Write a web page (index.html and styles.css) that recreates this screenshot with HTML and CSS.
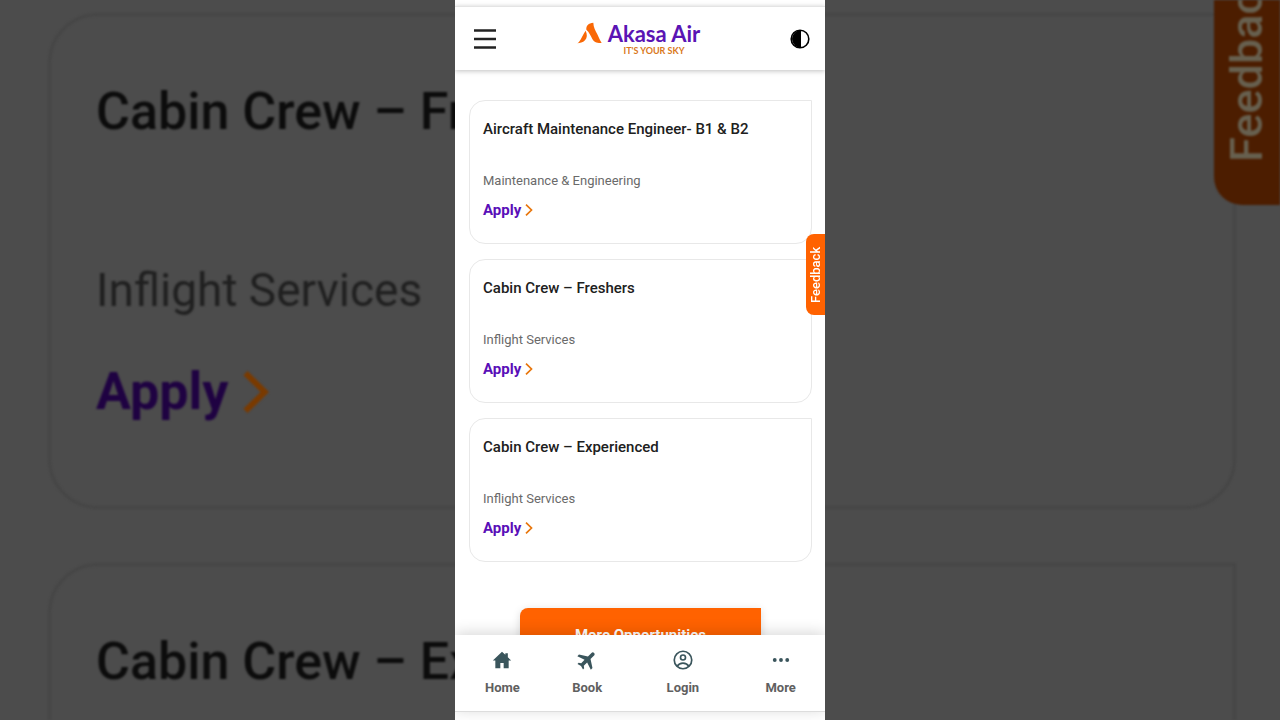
FILE: index.html
```html
<!DOCTYPE html>
<html lang="en">
<head>
    <meta charset="utf-8" />
    <meta name="viewport" content="width=device-width, initial-scale=1" />
    <title>Akasa Air - Careers</title>
    <link rel="stylesheet" href="styles.css">
</head>
<body>
    <div class="stage">

        <!-- enlarged, dimmed copy of the list behind the phone -->
        <div class="backdrop" aria-hidden="true" inert>
            <div class="jobs">
                <div class="job">
                    <h3>Cabin Crew – Freshers</h3>
                    <p>Inflight Services</p>
                    <a class="apply" href="#freshers">Apply
                        <svg class="chevron" viewBox="0 0 8 12"><path d="M1 .6l5.500 5.400-5.500 5.400" /></svg>
                    </a>
                </div>
                <div class="job">
                    <h3>Cabin Crew – Experienced</h3>
                    <p>Inflight Services</p>
                    <a class="apply" href="#experienced">Apply
                        <svg class="chevron" viewBox="0 0 8 12"><path d="M1 .6l5.500 5.400-5.500 5.400" /></svg>
                    </a>
                </div>
            </div>
            <button type="button" class="feedback">Feedback</button>
        </div>

        <div class="phone">
            <header class="header">
                <button type="button" class="icon_button" aria-label="Menu">
                    <svg class="menu_icon" viewBox="0 0 24 20"><path d="M1 1.500h22M1 10h22M1 18.500h22" /></svg>
                </button>
                <a class="logo" href="#home">
                    <svg class="logo_mark" viewBox="0 0 75 64">
                        <path d="M1 63C12 56 16 38 26 25C31 36 31 46 24 54C18 61 8 63 1 63Z" />
                        <path d="M28 22C27 10 34 2 49 1C49 14 56 26 61 36C66 46 69 55 74 62C63 62 52 62 46 50C41 40 37 30 28 22Z" />
                    </svg>
                    <span class="logo_text">
                        <span class="logo_name">Akasa Air</span>
                        <span class="logo_tag">IT'S YOUR SKY</span>
                    </span>
                </a>
                <button type="button" class="icon_button contrast" aria-label="Contrast">
                    <svg class="contrast_icon" viewBox="0 0 20 20">
                        <circle cx="10" cy="10" r="8.800" />
                        <path d="M11 1a9 9 0 1 0 0 18z" />
                    </svg>
                </button>
            </header>

            <main class="content">
                <div class="jobs">
                    <div class="job">
                        <h3>Aircraft Maintenance Engineer- B1 &amp; B2</h3>
                        <p>Maintenance &amp; Engineering</p>
                        <a class="apply" href="#engineer">Apply
                            <svg class="chevron" viewBox="0 0 8 12"><path d="M1 .6l5.500 5.400-5.500 5.400" /></svg>
                        </a>
                    </div>
                    <div class="job">
                        <h3>Cabin Crew – Freshers</h3>
                        <p>Inflight Services</p>
                        <a class="apply" href="#freshers">Apply
                            <svg class="chevron" viewBox="0 0 8 12"><path d="M1 .6l5.500 5.400-5.500 5.400" /></svg>
                        </a>
                    </div>
                    <div class="job">
                        <h3>Cabin Crew – Experienced</h3>
                        <p>Inflight Services</p>
                        <a class="apply" href="#experienced">Apply
                            <svg class="chevron" viewBox="0 0 8 12"><path d="M1 .6l5.500 5.400-5.500 5.400" /></svg>
                        </a>
                    </div>
                </div>
                <button type="button" class="more_button">More Opportunities</button>
            </main>

            <nav class="tabs">
                <a href="#home">
                    <svg viewBox="0 0 24 24"><path d="M12 2L1 12.500h3V22h6v-6.500h4V22h6v-9.500h3L19 8.700V4h-3v1.800z" /></svg>
                    Home
                </a>
                <a href="#book">
                    <svg viewBox="1 1 22 22"><path transform="rotate(45 12 12)" d="M22.500 16.500v-2.500l-8.500-5.500V3C14 1.800 13.100 1 12 1s-2 .8-2 2v5.500L1.500 14v2.500l8.500-2.700V19l-2.300 1.700V22.500l4.300-1.200 4.300 1.200v-1.800L14 19v-5.200z" /></svg>
                    Book
                </a>
                <a href="#login">
                    <svg class="outline" viewBox="0 0 24 24">
                        <circle cx="12" cy="12" r="10.500" />
                        <circle cx="12" cy="9" r="3" />
                        <path d="M5 19.500c1.500-2.500 4-3.800 7-3.800s5.500 1.300 7 3.800" />
                    </svg>
                    Login
                </a>
                <a href="#more">
                    <svg viewBox="0 0 24 24">
                        <circle cx="4.500" cy="12" r="2.300" />
                        <circle cx="12" cy="12" r="2.300" />
                        <circle cx="19.500" cy="12" r="2.300" />
                    </svg>
                    More
                </a>
            </nav>

            <button type="button" class="feedback">Feedback</button>
        </div>
    </div>
</body>
</html>
```
FILE: styles.css
```css
* {
    margin: 0;
    padding: 0;
    box-sizing: border-box;
}

body {
    font-family: Roboto, "Liberation Sans", sans-serif;
    background: #4c4c4c;
}

a {
    text-decoration: none;
}

button {
    font-family: inherit;
    border: none;
    cursor: pointer;
}

/* backdrop and phone share one grid cell */
.stage {
    display: grid;
    grid-template: 100vh / 100%;
    overflow: hidden;
}

.backdrop,
.phone {
    grid-area: 1 / 1;
    position: relative;
    overflow: hidden;
}

.phone {
    width: 370px;
    max-width: 100%;
    justify-self: center;
    display: flex;
    flex-direction: column;
    background: #fff;
    padding: 6px 0 8px;
}

/* header */
.header {
    display: grid;
    grid-template-columns: 1fr auto 1fr;
    align-items: center;
    height: 64px;
    flex-shrink: 0;
    padding: 0 15px 0 18px;
    border-top: 1px solid #e4e4e4;
    background: #fff;
    box-shadow: 0 1px 5px rgba(0, 0, 0, 0.25);
    z-index: 1;
}

.icon_button {
    display: flex;
    background: none;
}

.contrast {
    justify-self: end;
}

.menu_icon {
    width: 24px;
    height: 20px;
    stroke: #222;
    stroke-width: 2.4;
}

.contrast_icon {
    width: 20px;
    height: 20px;
    fill: #000;
}

.contrast_icon circle {
    fill: none;
    stroke: #000;
    stroke-width: 1.6;
}

.logo {
    display: flex;
    gap: 6px;
    padding-right: 6px;
}

.logo_mark {
    width: 25px;
    height: 22px;
    fill: #f96806;
}

.logo_text {
    display: flex;
    flex-direction: column;
    align-items: center;
    font-family: Lato, sans-serif;
    font-weight: 700;
}

.logo_name {
    font-size: 22px;
    line-height: 24px;
    color: #5a14b4;
}

.logo_tag {
    font-size: 9px;
    line-height: 10px;
    color: #d9781c;
}

/* job list */
.content {
    flex: 1;
    min-height: 0;
    overflow: hidden;
    padding: 30px 13px 0 14px;
    text-align: center;
}

.jobs {
    display: flex;
    flex-direction: column;
    gap: 15px;
    text-align: left;
}

.job {
    padding: 18px 13px 23px;
    border: 1px solid #e8e8e8;
    border-radius: 16px 0 16px 16px;
}

.job h3 {
    font-size: 15px;
    line-height: 20px;
    font-weight: 500;
    color: #202020;
}

.job p {
    margin: 32px 0 9px;
    font-size: 13px;
    line-height: 20px;
    color: #6a6a6a;
}

.apply {
    display: flex;
    align-items: center;
    gap: 4px;
    font-size: 15px;
    line-height: 20px;
    font-weight: 700;
    color: #5a0fb8;
}

.chevron {
    width: 8px;
    height: 12px;
    fill: none;
    stroke: #e8760c;
    stroke-width: 1.7;
}

.more_button {
    width: 241px;
    height: 54px;
    margin-top: 46px;
    border-radius: 8px 0 8px 8px;
    background: #ff6200;
    box-shadow: 0 2px 8px rgba(0, 0, 0, 0.15);
    color: #fff;
    font-size: 15px;
    font-weight: 700;
}

/* bottom tabs */
.tabs {
    display: grid;
    grid-template-columns: 95fr 75fr 117fr 79fr;
    flex-shrink: 0;
    padding: 15px 5px 13px 0;
    border-bottom: 1px solid #ddd;
    background: #fff;
    box-shadow: 0 -2px 14px rgba(0, 0, 0, 0.16);
    z-index: 1;
}

.tabs a {
    display: flex;
    flex-direction: column;
    align-items: center;
    gap: 8px;
    font-size: 13px;
    line-height: 20px;
    font-weight: 700;
    color: #606060;
}

.tabs svg {
    width: 20px;
    height: 20px;
    fill: #3a555c;
}

.tabs .outline {
    fill: none;
    stroke: #3a555c;
    stroke-width: 2;
}

/* feedback tab, reads bottom to top */
.feedback {
    position: absolute;
    top: 234px;
    right: 0;
    width: 19px;
    height: 81px;
    writing-mode: vertical-rl;
    transform: rotate(180deg);
    border-radius: 0 8px 8px 0;
    background: #ff6200;
    color: #fff;
    font-size: 13px;
    line-height: 19px;
    font-weight: 500;
    text-align: center;
    z-index: 2;
}

/* enlarged version */
.backdrop {
    padding: 13px 44px 0 48px;
    filter: blur(1px);
}

.backdrop .jobs {
    gap: 54px;
}

.backdrop .job {
    padding: 62px 45px 80px;
    border: 3px solid #464646;
    border-radius: 50px 0 50px 50px;
}

.backdrop .job h3 {
    font-size: 52px;
    line-height: 68px;
    color: #0c0c0c;
}

.backdrop .job p {
    margin: 110px 0 34px;
    font-size: 46px;
    line-height: 68px;
    color: #202020;
}

.backdrop .apply {
    gap: 13px;
    font-size: 52px;
    line-height: 68px;
    color: #1f0242;
}

.backdrop .chevron {
    width: 28px;
    height: 42px;
    stroke: #7a3a00;
}

.backdrop .feedback {
    top: -75px;
    width: 66px;
    height: 280px;
    border-radius: 0 28px 28px 0;
    background: #4c1d00;
    color: #67604f;
    font-size: 45px;
    line-height: 66px;
}
```
